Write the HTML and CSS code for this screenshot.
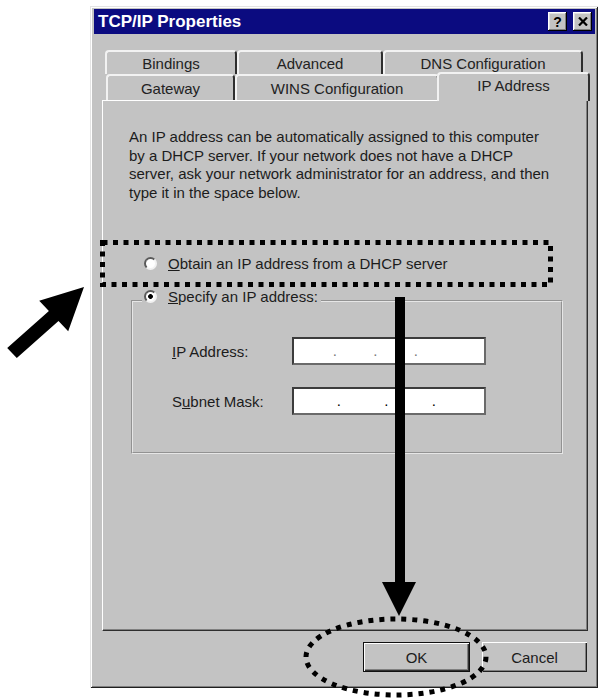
FILE: index.html
```html
<!DOCTYPE html>
<html>
<head>
<meta charset="utf-8">
<title>TCP/IP Properties</title>
<link rel="stylesheet" href="styles.css">
</head>
<body>
<div class="window">
  <div class="titlebar">
    <span class="title">TCP/IP Properties</span>
    <div class="tbtns">
      <span class="tbtn help">?</span>
      <span class="tbtn close"><svg width="10" height="9" viewBox="0 0 10 9"><path d="M1 0.5 L9 8.5 M9 0.5 L1 8.5" stroke="#000" stroke-width="2.2" fill="none"/></svg></span>
    </div>
  </div>
  <div class="tabs">
    <div class="tabrow back">
      <div class="tab w-bindings">Bindings</div>
      <div class="tab w-advanced">Advanced</div>
      <div class="tab w-dns">DNS Configuration</div>
    </div>
    <div class="tabrow front">
      <div class="tab w-gateway">Gateway</div>
      <div class="tab w-wins">WINS Configuration</div>
      <div class="tab w-ip active">IP Address</div>
    </div>
  </div>
  <div class="panel">
    <p class="intro">An IP address can be automatically assigned to this computer<br>by a DHCP server. If your network does not have a DHCP<br>server, ask your network administrator for an address, and then<br>type it in the space below.</p>
    <div class="option"><span class="radio"></span><span><u>O</u>btain an IP address from a DHCP server</span></div>
    <fieldset class="group">
      <legend><span class="radio checked"></span><u>S</u>pecify an IP address:</legend>
      <div class="field">
        <span class="lbl"><u>I</u>P Address:</span>
        <div class="ipbox ip"><span>.</span><span>.</span><span>.</span></div>
      </div>
      <div class="field">
        <span class="lbl">S<u>u</u>bnet Mask:</span>
        <div class="ipbox mask"><span>.</span><span>.</span><span>.</span></div>
      </div>
    </fieldset>
  </div>
  <div class="buttons">
    <button class="btn ok">OK</button>
    <button class="btn cancel">Cancel</button>
  </div>
</div>
<svg class="overlay" width="604" height="698" viewBox="0 0 604 698">
  <rect x="102.5" y="242.5" width="448" height="42" fill="none" stroke="#000" stroke-width="5" stroke-dasharray="5 5.5"/>
  <rect x="395" y="297" width="10" height="286" fill="#000"/>
  <polygon points="382,582 416,582 399,616" fill="#000"/>
  <ellipse cx="396" cy="657" rx="90" ry="38" fill="none" stroke="#000" stroke-width="5" stroke-dasharray="5 6"/>
  <polygon points="84,287 68.2,331.2 58.5,321.1 16.8,358.1 7.2,347.9 48.9,310.9 39.2,300.8" fill="#000"/>
</svg>
</body>
</html>
```
FILE: styles.css
```css
* { box-sizing: border-box; }
html, body { margin: 0; background: #fff; }
body {
  font-family: "Liberation Sans", Arial, sans-serif;
  font-size: 15px;
  color: #1c1c1c;
  width: 604px;
  height: 698px;
  overflow: hidden;
}
.window {
  margin: 6px 0 0 90px;
  width: 508px;
  height: 682px;
  background: #c3c3c3;
  padding: 3px 3px 0 4px;
  box-shadow: inset 1px 1px 0 #e4e4e4, inset -1px -1px 0 #202020, inset 2px 2px 0 #fff, inset -2px -2px 0 #808080;
}
.titlebar {
  height: 25px;
  background: #0b0b80;
  display: flex;
  align-items: center;
  justify-content: space-between;
  padding: 0 3px 0 4px;
  color: #fff;
  font-weight: bold;
  font-size: 17px;
}
.tbtns { display: flex; gap: 6px; }
.tbtn {
  width: 19px;
  height: 19px;
  background: #c3c3c3;
  box-shadow: inset -1px -1px 0 #000, inset 1px 1px 0 #fff, inset -2px -2px 0 #808080, inset 2px 2px 0 #dfdfdf;
  display: flex;
  align-items: center;
  justify-content: center;
  color: #000;
  font-size: 14px;
  font-weight: bold;
}
.tabs { margin-top: 16px; }
.tabrow { display: flex; }
.tabrow.back { margin-left: 11px; height: 24px; }
.tabrow.front { margin-left: 12px; height: 26px; }
.tab {
  height: 100%;
  display: flex;
  align-items: center;
  justify-content: center;
  border-top: 2px solid #f2f2f2;
  border-left: 2px solid #f2f2f2;
  border-right: 2px solid #2e2e2e;
  border-radius: 4px 4px 0 0;
  background: #c3c3c3;
  color: #222;
  white-space: nowrap;
}
.w-bindings { width: 132px; }
.w-advanced { width: 146px; }
.w-dns { width: 200px; }
.w-gateway { width: 129px; }
.w-wins { width: 204px; }
.w-ip { width: 149px; }
.tab.active {
  width: 153px;
  height: 29px;
  margin: -2px -2px 0 -2px;
  padding-bottom: 5px;
  position: relative;
  z-index: 1;
}
.panel {
  margin-left: 8px;
  width: 486px;
  height: 531px;
  border-top: 1px solid #fff;
  border-left: 1px solid #fff;
  border-right: 1px solid #2e2e2e;
  border-bottom: 1px solid #2e2e2e;
  box-shadow: inset -1px -1px 0 #808080;
  padding: 27px 0 0 26px;
}
.intro { margin: 0; line-height: 18.5px; white-space: nowrap; }
.option {
  display: flex;
  align-items: center;
  gap: 11px;
  height: 18px;
  margin: 52px 0 0 15px;
  white-space: nowrap;
}
.radio {
  flex: none;
  width: 13px;
  height: 13px;
  border-radius: 50%;
  border: 2px solid;
  border-color: #5a5a5a #f2f2f2 #f2f2f2 #5a5a5a;
  background: #fff;
}
.radio.checked { background: radial-gradient(circle, #000 0 2px, #fff 2.8px); }
.group {
  margin: 16px 0 0 2px;
  width: 432px;
  padding: 0 0 37px 0;
  border: 2px groove #e6e6e6;
  min-inline-size: auto;
}
.group legend {
  margin-left: 9px;
  padding: 0 3px 8px 2px;
  line-height: 18px;
  white-space: nowrap;
}
.group legend .radio {
  display: inline-block;
  vertical-align: -1px;
  margin-right: 11px;
}
.field {
  display: flex;
  align-items: center;
  margin: 23px 0 0 39px;
}
.field + .field { margin-top: 22px; }
.lbl { width: 120px; white-space: nowrap; }
.ipbox {
  width: 194px;
  height: 28px;
  background: #fff;
  border: 2px solid;
  border-color: #3c3c3c #6a6a6a #6a6a6a #3c3c3c;
  display: flex;
  line-height: 24px;
}
.ipbox.ip { padding-left: 38.8px; gap: 36.3px; color: #777; }
.ipbox.mask { padding-left: 42.8px; gap: 43.3px; color: #000; }
.buttons {
  display: flex;
  justify-content: flex-end;
  gap: 12px;
  margin-top: 11px;
  padding-right: 8px;
}
.btn {
  height: 30px;
  font: inherit;
  color: #1c1c1c;
  background: #c3c3c3;
  border: none;
  padding: 0;
  box-shadow: inset 1px 1px 0 #fff, inset -1px -1px 0 #202020, inset -2px -2px 0 #808080;
}
.btn.ok {
  width: 107px;
  box-shadow: inset 0 0 0 1px #101010, inset 2px 2px 0 #fff, inset -2px -2px 0 #303030, inset -3px -3px 0 #808080;
}
.btn.cancel { width: 105px; }
.overlay { position: absolute; left: 0; top: 0; pointer-events: none; }
```
